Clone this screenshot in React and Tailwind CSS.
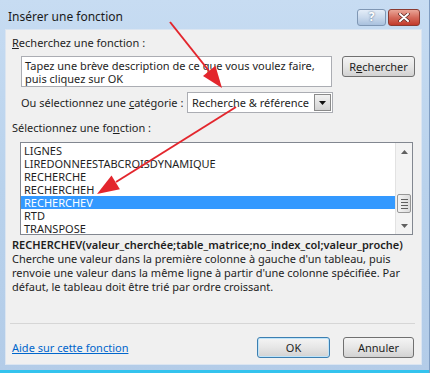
const items = ['LIGNES', 'LIREDONNEESTABCROISDYNAMIQUE', 'RECHERCHE', 'RECHERCHEH', 'RECHERCHEV', 'RTD', 'TRANSPOSE'];

function WinButton({ children, focused, className }) {
  return (
    <div
      className={
        'flex items-center justify-center h-[21px] rounded-[3px] border bg-gradient-to-b from-[#f4f4f4] via-[#e6e6e6] to-[#d2d2d2] ' +
        (focused ? 'border-[#3c7fb1] shadow-[inset_0_0_0_1px_#bfe4f9] ' : 'border-[#707070] ') +
        className
      }
    >
      {children}
    </div>
  );
}

export default function App() {
  return (
    <div className="relative w-[430px] h-[373px] overflow-hidden bg-gradient-to-b from-[#c7dcf2] via-[#b9d2ec] to-[#b3cce8] border-r border-[#7f9dc2] font-['Noto_Sans',sans-serif] text-[11px] leading-[14px] text-[#1e1e1e] whitespace-nowrap">
      {/* title bar */}
      <div className="flex items-center h-[29px] pt-[5px] pl-[8px] pr-[9px]">
        <span className="text-[12px] text-[#1a1a1a]">Insérer une fonction</span>
        <div className="ml-auto flex gap-[2px]">
          <div className="w-[29px] h-[17px] rounded-[3px] border border-[#7f97b4] bg-gradient-to-b from-[#e4edf8] via-[#c9d9ec] to-[#a9c1de] flex items-center justify-center text-[12px] font-bold text-white leading-none [text-shadow:0_0_2px_#405a7a]">
            ?
          </div>
          <div className="w-[32px] h-[17px] rounded-[3px] border border-[#8b3a30] bg-gradient-to-b from-[#e9a597] via-[#d46a5b] to-[#c2392b] flex items-center justify-center">
            <svg width="12" height="9" viewBox="0 0 12 9">
              <path d="M2 1 L10 8 M10 1 L2 8" stroke="#5a2520" strokeWidth="3.4" strokeLinecap="round" />
              <path d="M2 1 L10 8 M10 1 L2 8" stroke="#ffffff" strokeWidth="2" strokeLinecap="round" />
            </svg>
          </div>
        </div>
      </div>

      {/* content panel */}
      <div className="ml-[5px] w-[417px] h-[336px] bg-[#f0f0f0] border border-[#dbe5f1] flex flex-col">
        <div className="pt-[6px] pl-[6px]">
          <span className="underline">R</span>echerchez une fonction :
        </div>

        <div className="mt-[6px] pl-[15px] flex items-start">
          <div className="w-[311px] h-[31px] bg-white border border-[#abadb3] px-[3px] pt-[2px] leading-[13px]">
            Tapez une brève description de ce que vous voulez faire,
            <br />
            puis cliquez sur OK
          </div>
          <WinButton className="ml-[10px] w-[73px]">
            <span>
              R<span className="underline">e</span>chercher
            </span>
          </WinButton>
        </div>

        <div className="mt-[5px] pl-[15px] flex items-center">
          <div className="w-[166px]">
            Ou sélectionnez une <span className="underline">c</span>atégorie :
          </div>
          <div className="w-[146px] h-[21px] bg-white border border-[#abadb3] flex items-center pl-[4px] pr-[1px]">
            <span>Recherche &amp; référence</span>
            <div className="ml-auto w-[17px] h-[17px] border border-[#8a8a8a] bg-gradient-to-b from-[#f2f2f2] to-[#d4d4d4] flex items-center justify-center">
              <svg width="7" height="4" viewBox="0 0 7 4">
                <path d="M0 0 H7 L3.5 4 Z" fill="#111" />
              </svg>
            </div>
          </div>
        </div>

        <div className="mt-[8px] pl-[6px]">
          Sélectionnez une fo<span className="underline">n</span>ction :
        </div>

        <div className="mt-[7px] ml-[14px] w-[393px] h-[93px] bg-white border border-[#828790] flex">
          <div className="flex-1 pt-[1px]">
            {items.map((it) => (
              <div
                key={it}
                className={
                  'h-[13px] leading-[13px] pl-[3px] ' + (it === 'RECHERCHEV' ? 'bg-[#3399ff] text-white' : '')
                }
              >
                {it}
              </div>
            ))}
          </div>
          <div className="w-[17px] bg-[#f3f3f3] border-l border-[#e2e2e2] flex flex-col">
            <div className="h-[17px] flex items-center justify-center">
              <svg width="7" height="4" viewBox="0 0 7 4">
                <path d="M0 4 H7 L3.5 0 Z" fill="#606060" />
              </svg>
            </div>
            <div className="h-[34px]" />
            <div className="mx-[1px] h-[19px] rounded-[2px] border border-[#979797] bg-gradient-to-r from-[#f3f3f3] to-[#dcdcdc] flex flex-col items-center justify-center gap-[2px]">
              <div className="w-[7px] h-[1px] bg-[#5f5f5f]" />
              <div className="w-[7px] h-[1px] bg-[#5f5f5f]" />
              <div className="w-[7px] h-[1px] bg-[#5f5f5f]" />
              <div className="w-[7px] h-[1px] bg-[#5f5f5f]" />
            </div>
            <div className="flex-1" />
            <div className="h-[17px] flex items-center justify-center">
              <svg width="7" height="4" viewBox="0 0 7 4">
                <path d="M0 0 H7 L3.5 4 Z" fill="#606060" />
              </svg>
            </div>
          </div>
        </div>

        <div className="mt-[3px] pl-[6px] font-semibold">
          RECHERCHEV(valeur_cherchée;table_matrice;no_index_col;valeur_proche)
        </div>
        <div className="pl-[6px] leading-[14px]">
          Cherche une valeur dans la première colonne à gauche d'un tableau, puis
          <br />
          renvoie une valeur dans la même ligne à partir d'une colonne spécifiée. Par
          <br />
          défaut, le tableau doit être trié par ordre croissant.
        </div>

        <div className="mt-auto ml-[4px] mr-[6px] h-[1px] bg-[#d6d6d6]" />
        <div className="mt-[13px] mb-[6px] pl-[6px] pr-[7px] flex items-center">
          <span className="text-[#0066cc] underline">Aide sur cette fonction</span>
          <WinButton focused className="ml-auto w-[73px]">
            OK
          </WinButton>
          <WinButton className="ml-[13px] w-[71px]">Annuler</WinButton>
        </div>
      </div>

      <div className="absolute left-0 right-0 bottom-0 h-[3px] bg-[#34c3ee]" />

      {/* red annotation arrows */}
      <svg className="absolute inset-0 pointer-events-none" width="430" height="373" viewBox="0 0 430 373">
        <line x1="170" y1="22" x2="209" y2="71" stroke="#e3262d" strokeWidth="2" />
        <polygon points="203,76 215.4,65.8 222,88" fill="#e3262d" />
        <line x1="236" y1="107" x2="116" y2="182" stroke="#e3262d" strokeWidth="2" />
        <polygon points="111.5,175.6 119.9,189.2 97,194" fill="#e3262d" />
      </svg>
    </div>
  );
}
